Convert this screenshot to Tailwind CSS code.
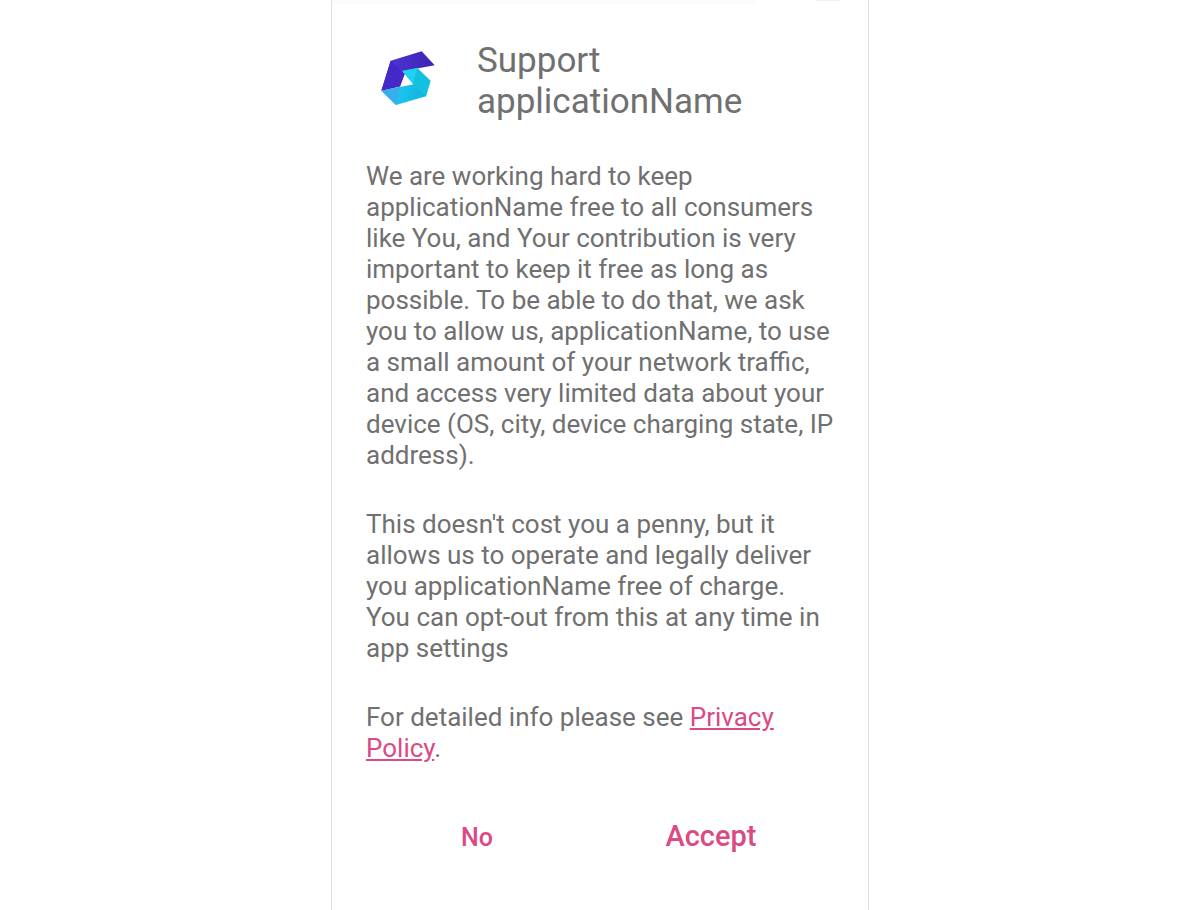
<!DOCTYPE html>
<html lang="en">
<head>
    <meta charset="UTF-8">
    <meta name="viewport" content="width=device-width, initial-scale=1.0">
    <title>Support applicationName</title>
    <script src="https://cdn.jsdelivr.net/npm/@tailwindcss/browser@4"></script>
</head>
<body class="bg-white font-['Roboto',sans-serif] text-[#707070]">
    <main class="mx-auto w-full max-w-[538px] min-h-screen border-x border-[#e0e0e0] pb-8">
        <!-- Edge of the status bar -->
        <div class="flex h-1 justify-between pr-7" aria-hidden="true">
            <div class="h-1 w-5/6 bg-[#fbfbfb]"></div>
            <div class="h-px w-6 bg-[#f0f0f0]"></div>
        </div>

        <!-- Header -->
        <header class="flex items-start px-[34px] pt-9">
            <svg class="ml-3 mt-2 h-16 w-16 shrink-0" viewBox="24 24 192 192" aria-hidden="true">
                <defs>
                    <linearGradient id="top" x1="0" y1="0" x2="1" y2="0">
                        <stop offset="0" stop-color="#4f38d8"/>
                        <stop offset="1" stop-color="#4023b4"/>
                    </linearGradient>
                    <linearGradient id="bottom" x1="0" y1="0" x2="1" y2="0">
                        <stop offset="0" stop-color="#38b0ec"/>
                        <stop offset="0.4" stop-color="#1cc4ee"/>
                        <stop offset="1" stop-color="#10b4dc"/>
                    </linearGradient>
                </defs>
                <path d="M62 62L155 34L194 76L97 94L104 103L91 139L34 152Z" fill="url(#top)"/>
                <path d="M62 62L97 94L104 103L91 139L34 152Z" fill="#4429c8"/>
                <path d="M34 152L138 131L168 169L78 195Z" fill="url(#bottom)"/>
                <path d="M34 152L91 140L78 195Z" fill="#38aeea"/>
                <path d="M97 93L142 84L182 122L168 170L128 131Z" fill="#14c0e2"/>
                <path d="M97 93L142 84L128 131Z" fill="#1ed2f0"/>
                <path d="M104 104L128 131L91 139Z" fill="#fff"/>
            </svg>
            <h1 class="ml-[35px] text-[35px] leading-[41px]">Support<br>applicationName</h1>
        </header>

        <div class="mt-[39px] space-y-[38px] pl-[34px] pr-7 text-[26px] leading-[31px]">
            <p>We are working hard to keep applicationName free to all consumers like You, and Your contribution is very important to keep it free as long as possible. To be able to do that, we ask you to allow us, applicationName, to use a small amount of your network traffic, and access very limited data about your device (OS, city, device charging state, IP address).</p>
            <p>This doesn't cost you a penny, but it allows us to operate and legally deliver you applicationName free of charge.<br>You can opt-out from this at any time in app settings</p>
            <p>For detailed info please see <a href="#" class="text-[#dc4a83] underline">Privacy Policy</a>.</p>
        </div>

        <!-- Actions -->
        <div class="mt-[51px] grid grid-cols-2 items-baseline pl-7 pr-10 text-[#dc4a83]">
            <button type="button" class="text-[25px] font-medium">No</button>
            <button type="button" class="text-[29px] font-medium">Accept</button>
        </div>
    </main>
</body>
</html>
